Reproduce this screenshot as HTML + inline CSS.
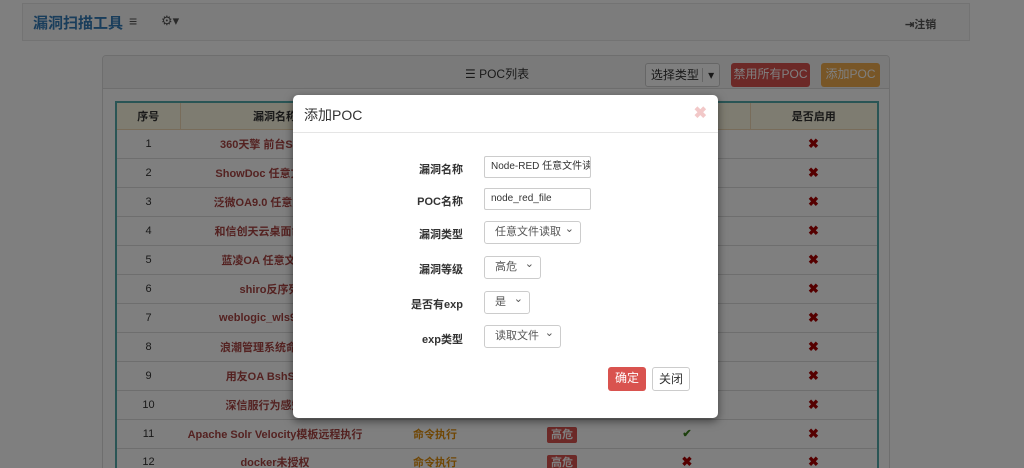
<!DOCTYPE html>
<html><head><meta charset="utf-8"><style>
*{box-sizing:border-box;margin:0;padding:0}
html,body{width:1024px;height:468px;overflow:hidden}
body{background:#fff;font-family:"Liberation Sans","Noto Sans CJK SC",sans-serif;font-size:12px;color:#333;position:relative}
.nav{position:absolute;left:22px;top:3px;width:948px;height:38px;background:#f8f8f8;border:1px solid #e7e7e7}
.brand{position:absolute;left:10px;top:8px;font-size:15px;font-weight:bold;color:#337ab7}
.panel{position:absolute;left:102px;top:55px;width:788px;height:420px;border:1px solid #ddd;border-radius:4px;background:#fff;overflow:hidden}
.ph{height:33px;background:#f5f5f5;border-bottom:1px solid #ddd;position:relative}
.btn{position:absolute;border-radius:3px;font-size:12px;text-align:center;line-height:22px;height:24px;white-space:nowrap}
table{position:absolute;left:12px;top:45px;width:764px;border-collapse:collapse;border:2px solid #5aa;font-size:11px;table-layout:fixed}
th{background:#fcf8e3;height:27px;border:1px solid #f0d9b5;font-weight:bold}
td{height:29px;text-align:center;border-top:1px solid #ddd;white-space:nowrap;overflow:hidden}
td.n{color:#a94442;font-weight:bold}
td.t{color:#e08e0b;font-weight:bold}
.x{color:#a00;font-weight:bold;font-size:13px}
.ok{color:#3a7f1a;font-weight:bold}
.badge{background:#d9534f;color:#fff;padding:2px 4px;border-radius:2px;font-weight:bold}
.ov{position:absolute;left:0;top:0;width:1024px;height:468px;background:rgba(0,0,0,.5)}
.modal{position:absolute;left:293px;top:95px;width:425px;height:323px;background:#fff;border-radius:5px;box-shadow:0 3px 9px rgba(0,0,0,.5)}
.mh{height:38px;border-bottom:1px solid #e5e5e5;font-size:14px;padding:10px 11px}
.lab{position:absolute;right:255px;font-weight:bold;font-size:11px;text-align:right}
.inp{position:absolute;left:191px;border:1px solid #ccc;border-radius:2px;font-size:10px;padding:0 6px;line-height:20px;height:22px;white-space:nowrap;overflow:hidden}
.sel{position:absolute;left:191px;border:1px solid #ccc;border-radius:3px;font-size:11px;padding:0 10px;line-height:21px;height:23px;color:#555;white-space:nowrap}
.sel:after{content:"⌄";position:absolute;right:6px;top:-3px;font-size:11px}
</style></head><body>
<div class="nav"><span class="brand">漏洞扫描工具</span>
<span style="position:absolute;left:106px;top:9px;font-size:14px;color:#555">≡</span>
<span style="position:absolute;left:138px;top:9px;font-size:13px;color:#555">⚙▾</span>
<span style="position:absolute;left:882px;top:12px;font-size:11px;color:#555;font-weight:bold">⇥注销</span></div>
<div class="panel"><div class="ph">
<span style="position:absolute;left:362px;top:9px;font-size:12px">☰ POC列表</span>
<span class="btn" style="left:542px;top:7px;width:75px;border:1px solid #ccc;background:#fff">选择类型 <span style="border-left:1px solid #ccc;padding-left:5px">▾</span></span>
<span class="btn" style="left:628px;top:7px;width:79px;background:#d9534f;color:#fff">禁用所有POC</span>
<span class="btn" style="left:718px;top:7px;width:59px;background:#f0ad4e;color:#fff">添加POC</span>
</div>
<table>
<tr><th style="width:64px">序号</th><th style="width:190px">漏洞名称</th><th style="width:130px">漏洞类型</th><th style="width:124px">漏洞等级</th><th style="width:126px">是否有exp</th><th>是否启用</th></tr>
<tr><td>1</td><td class="n">360天擎 前台SQL注入</td><td class="t">SQL注入</td><td><span class="badge">高危</span></td><td></td><td class="x">✖</td></tr>
<tr><td>2</td><td class="n">ShowDoc 任意文件上传</td><td class="t">文件上传</td><td><span class="badge">高危</span></td><td></td><td class="x">✖</td></tr>
<tr><td>3</td><td class="n">泛微OA9.0 任意文件上传</td><td class="t">文件上传</td><td><span class="badge">高危</span></td><td></td><td class="x">✖</td></tr>
<tr><td>4</td><td class="n">和信创天云桌面命令执行</td><td class="t">命令执行</td><td><span class="badge">高危</span></td><td></td><td class="x">✖</td></tr>
<tr><td>5</td><td class="n">蓝凌OA 任意文件读取</td><td class="t">文件读取</td><td><span class="badge">高危</span></td><td></td><td class="x">✖</td></tr>
<tr><td>6</td><td class="n">shiro反序列化</td><td class="t">命令执行</td><td><span class="badge">高危</span></td><td></td><td class="x">✖</td></tr>
<tr><td>7</td><td class="n">weblogic_wls9-async</td><td class="t">命令执行</td><td><span class="badge">高危</span></td><td></td><td class="x">✖</td></tr>
<tr><td>8</td><td class="n">浪潮管理系统命令执行</td><td class="t">命令执行</td><td><span class="badge">高危</span></td><td></td><td class="x">✖</td></tr>
<tr><td>9</td><td class="n">用友OA BshServlet</td><td class="t">命令执行</td><td><span class="badge">高危</span></td><td></td><td class="x">✖</td></tr>
<tr><td>10</td><td class="n">深信服行为感知系统</td><td class="t">命令执行</td><td><span class="badge">高危</span></td><td></td><td class="x">✖</td></tr>
<tr><td>11</td><td class="n">Apache Solr Velocity模板远程执行</td><td class="t">命令执行</td><td><span class="badge">高危</span></td><td class="ok">✔</td><td class="x">✖</td></tr>
<tr><td>12</td><td class="n">docker未授权</td><td class="t">命令执行</td><td><span class="badge">高危</span></td><td class="x">✖</td><td class="x">✖</td></tr>
</table></div>
<div class="ov"></div>
<div class="modal">
<div class="mh">添加POC<span style="position:absolute;right:11px;top:8px;color:#f2c8c8;font-size:16px;font-weight:bold">✖</span></div>
<div class="lab" style="top:66px">漏洞名称</div><div class="inp" style="top:61px;width:107px">Node-RED 任意文件读取</div>
<div class="lab" style="top:98px">POC名称</div><div class="inp" style="top:93px;width:107px">node_red_file</div>
<div class="lab" style="top:131px">漏洞类型</div><div class="sel" style="top:126px;width:97px">任意文件读取</div>
<div class="lab" style="top:166px">漏洞等级</div><div class="sel" style="top:161px;width:57px">高危</div>
<div class="lab" style="top:201px">是否有exp</div><div class="sel" style="top:196px;width:46px">是</div>
<div class="lab" style="top:236px">exp类型</div><div class="sel" style="top:230px;width:77px">读取文件</div>
<span class="btn" style="left:315px;top:272px;width:38px;background:#d9534f;color:#fff">确定</span>
<span class="btn" style="left:359px;top:272px;width:38px;border:1px solid #ccc;background:#fff">关闭</span>
</div>
</body></html>
